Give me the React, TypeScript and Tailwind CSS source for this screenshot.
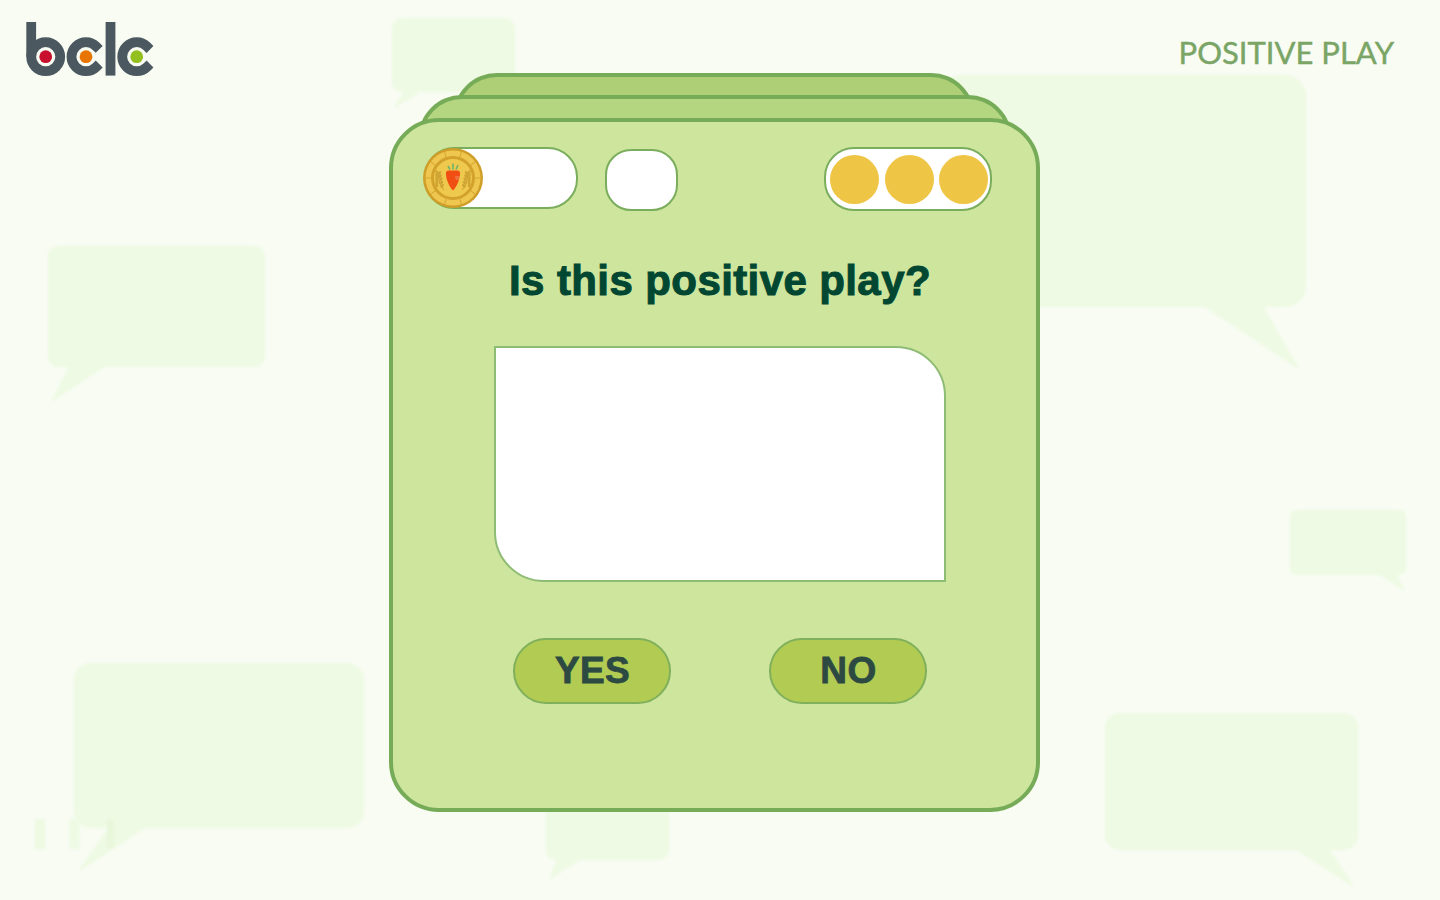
const Logo = () => (
  <svg width="130" height="56" viewBox="26 21 130 56" fill="none" aria-label="bclc">
    <g stroke="#4c5860" strokeWidth="9.8">
      <path d="M31.2 22V56.7" />
      <circle cx="45.7" cy="56.7" r="14.5" />
      <path d="M99.200 49.400L96.250 46.450A14.5 14.5 0 1 0 96.250 66.950L99.200 64" />
      <path d="M110.500 22V75.600" />
      <path d="M150 49.400L147 46.450A14.5 14.5 0 1 0 147 66.950L150 64" />
    </g>
    <circle cx="45.7" cy="56.7" r="6.4" fill="#c8102e" />
    <circle cx="86" cy="56.7" r="6.4" fill="#e87500" />
    <circle cx="136.7" cy="56.7" r="6.4" fill="#93c01f" />
  </svg>
);

const angles = [0, 36, 72, 108, 144, 180, 216, 252, 288, 324];
const wheat = [0, 1, 2, 3, 4];

const Coin = () => (
  <svg className="absolute -left-[3px] -top-[1px]" width="60" height="60" viewBox="-30 -30 60 60">
    <circle r="30" fill="#cf9e28" />
    <circle r="27.500" fill="#efc750" />
    {angles.map((a) => (
      <line key={a} x1="0" y1="-22" x2="0" y2="-27.500" stroke="#d5a631" strokeWidth="1" transform={`rotate(${a + 18})`} />
    ))}
    <circle r="20.500" fill="#efc94e" stroke="#d2a22c" strokeWidth="3" />
    <path d="M-7-5Q-7-7.500-4.500-7.500H4.500Q7-7.500 7-5C7.500 1 3 10 0 12.500C-3 10-7.500 1-7-5Z" fill="#f04e12" />
    <path d="M2-1H7M2.500 1H6" stroke="#f49a70" strokeWidth="0.9" />
    <path d="M0-8.500V-14.500M-3-8.500L-5-12M3-8.500L5-13" stroke="#6fb36b" strokeWidth="1.6" />
    {[-1, 1].map((s) => (
      <g key={s} transform={`scale(${s} 1)`}>
        <path d="M9 12Q16 5 14-6" stroke="#cda02e" strokeWidth="1" fill="none" />
        {wheat.map((i) => (
          <g key={i}>
            <ellipse cx={10.8 + i * 0.7} cy={8 - i * 3.2} rx="1.300" ry="2.300" fill="#cfa434" transform={`rotate(-35 ${10.8 + i * 0.7} ${8 - i * 3.2})`} />
            <ellipse cx={16.2} cy={7 - i * 3.2} rx="1.300" ry="2.300" fill="#cfa434" transform={`rotate(30 16.2 ${7 - i * 3.2})`} />
          </g>
        ))}
      </g>
    ))}
  </svg>
);

const BackgroundArt = () => (
  <svg className="absolute inset-0 blur-[1px]" width="1440" height="900" viewBox="0 0 1440 900" fill="#eefae3" stroke="#eefae3" strokeLinejoin="round" strokeWidth="2">
    <rect x="393" y="19" width="121" height="72" rx="9" />
    <path d="M405 91H420L396 106Z" />
    <rect x="940" y="76" width="365" height="230" rx="20" />
    <path d="M1205 306H1262L1297 367Z" />
    <rect x="49" y="247" width="215" height="119" rx="10" />
    <path d="M70 366H104L53 400Z" />
    <rect x="1291" y="511" width="114" height="63" rx="6" />
    <path d="M1380 574H1395L1403 589Z" />
    <rect x="75" y="664" width="288" height="163" rx="16" />
    <path d="M110 827H145L81 869Z" />
    <rect x="547" y="790" width="121" height="69" rx="9" />
    <path d="M558 859H580L551 877Z" />
    <rect x="1106" y="714" width="251" height="135" rx="14" />
    <path d="M1297 849H1328L1352 885Z" />
    <rect x="36" y="820" width="8" height="28" />
    <rect x="70.500" y="820" width="8" height="28" />
    <rect x="107" y="820" width="6.600" height="28" fill="#e8f7da" stroke="none" />
  </svg>
);

const AnswerButton = ({ label }: { label: string }) => (
  <button className="h-[66px] w-[158px] rounded-full border-2 border-[#80b05c] bg-[#b1cb53] pl-[1px] font-['Liberation_Sans',sans-serif] text-[37px] font-bold tracking-[0.4px] text-[#2c4a42] [-webkit-text-stroke:0.8px_#2c4a42]">
    {label}
  </button>
);

export default function App() {
  return (
    <div className="relative h-[900px] w-[1440px] overflow-hidden bg-[#f8fcf3]">
      <BackgroundArt />
      <div className="relative flex h-[73px] items-start justify-between pl-[26px] pr-[46px] pt-[21px]">
        <Logo />
        <span className="mt-[13px] font-['Lato',sans-serif] text-[31px] leading-[36px] text-[#7aa566] [-webkit-text-stroke:0.4px_#7aa566]">POSITIVE PLAY</span>
      </div>
      <div className="relative ml-[389px] w-[651px]">
        <div className="ml-[64px] h-[60px] w-[522px] rounded-t-[44px] border-4 border-b-0 border-[#76ab57] bg-[#afcf76]" />
        <div className="relative -mt-[38px] ml-[29px] h-[60px] w-[594px] rounded-t-[44px] border-4 border-b-0 border-[#76ab57] bg-[#b5d680]" />
        <div className="relative -mt-[37px] h-[694px] rounded-[50px] border-4 border-[#76ab57] bg-[#cee59e] pl-[31px] pr-[44px] pt-[25px]">
          <div className="flex items-start">
            <div className="relative h-[62px] w-[154px] rounded-[30px] border-2 border-[#7aad5c] bg-white">
              <Coin />
            </div>
            <div className="ml-[27px] mt-[2px] h-[62px] w-[73px] rounded-[26px] border-2 border-[#7aad5c] bg-white" />
            <div className="ml-auto flex h-[64px] w-[168px] items-center gap-[5.5px] rounded-[30px] border-2 border-[#7aad5c] bg-white pl-[4px]">
              <span className="h-[49px] w-[49px] rounded-full bg-[#efc546]" />
              <span className="h-[49px] w-[49px] rounded-full bg-[#efc546]" />
              <span className="h-[49px] w-[49px] rounded-full bg-[#efc546]" />
            </div>
          </div>
          <div className="ml-[70px] w-[452px]">
            <h1 className="mt-[40px] h-[60px] whitespace-nowrap text-center font-['Liberation_Sans',sans-serif] text-[42px] font-bold leading-[60px] tracking-[0.4px] text-[#024731] [-webkit-text-stroke:1px_#024731]">
              Is this positive play?
            </h1>
            <div className="mt-[35px] h-[236px] rounded-bl-[50px] rounded-tr-[50px] border-2 border-[#8fbc74] bg-white" />
            <div className="mt-[56px] flex justify-between px-[19px]">
              <AnswerButton label="YES" />
              <AnswerButton label="NO" />
            </div>
          </div>
        </div>
      </div>
    </div>
  );
}
